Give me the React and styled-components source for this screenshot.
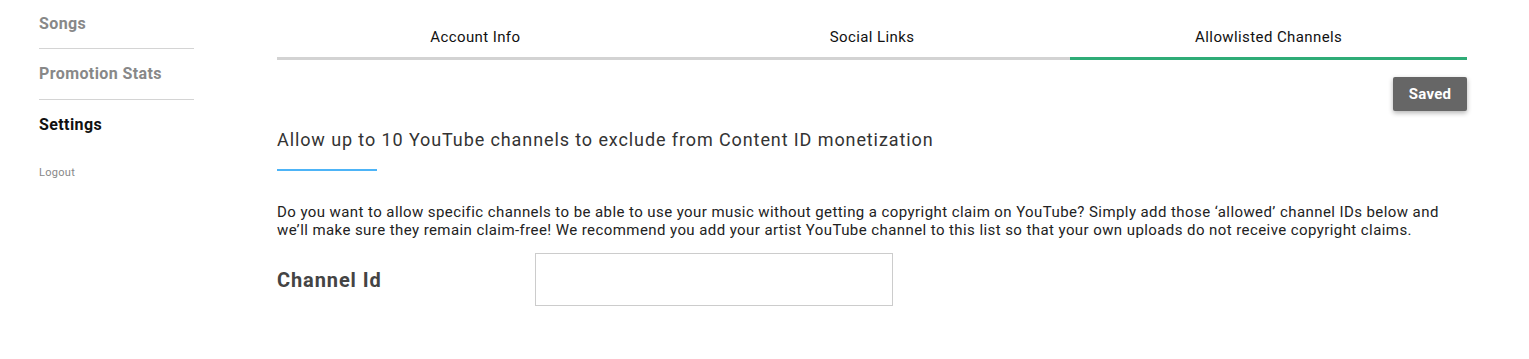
import React from "react";
import styled, { createGlobalStyle } from "styled-components";

const GlobalStyle = createGlobalStyle`
  body {
    margin: 0;
    background: #fff;
    font-family: Roboto, "Liberation Sans", Arial, sans-serif;
  }
`;

const tabs = ["Account Info", "Social Links", "Allowlisted Channels"];

const App = () => {
  return (
    <Page>
      <GlobalStyle />
      <Sidebar>
        <NavItem>Songs</NavItem>
        <NavItem>Promotion Stats</NavItem>
        <NavItem active last>
          Settings
        </NavItem>
        <Logout>Logout</Logout>
      </Sidebar>
      <Main>
        <Tabs>
          {tabs.map((t, i) => (
            <Tab key={t} active={i === 2}>
              {t}
            </Tab>
          ))}
        </Tabs>
        <Actions>
          <SaveBtn type="button">Saved</SaveBtn>
        </Actions>
        <Heading>Allow up to 10 YouTube channels to exclude from Content ID monetization</Heading>
        <Accent />
        <Description>
          Do you want to allow specific channels to be able to use your music without getting a copyright
          claim on YouTube? Simply add those ‘allowed’ channel IDs below and we’ll make sure they remain
          claim-free! We recommend you add your artist YouTube channel to this list so that your own uploads
          do not receive copyright claims.
        </Description>
        <FieldRow>
          <FieldLabel>Channel Id</FieldLabel>
          <TextInput type="text" />
        </FieldRow>
      </Main>
    </Page>
  );
};
export default App;

const Page = styled.div`
  display: flex;
  align-items: flex-start;
  width: 1529px;
  height: 359px;
  overflow: hidden;
`;
const Sidebar = styled.nav`
  display: flex;
  flex-direction: column;
  width: 155px;
  margin-left: 39px;
  margin-right: 83px;
`;
const NavItem = styled.div`
  font-size: 16px;
  line-height: 20px;
  font-weight: 700;
  letter-spacing: 0.4px;
  color: ${(p) => (p.active ? "#111" : "#888")};
  padding: ${(p) => (p.active ? "15px 0 0" : "15px 0 15px")};
  border-bottom: ${(p) => (p.last ? "none" : "1px solid #d4d4d4")};
  &:first-child {
    padding-top: 14px;
    padding-bottom: 14px;
  }
`;
const Logout = styled.div`
  margin-top: 31px;
  font-size: 11px;
  line-height: 14px;
  letter-spacing: 0.3px;
  color: #888;
`;
const Main = styled.main`
  display: flex;
  flex-direction: column;
  width: 1190px;
`;
const Tabs = styled.div`
  display: grid;
  grid-template-columns: repeat(3, 1fr);
`;
const Tab = styled.div`
  text-align: center;
  font-size: 15px;
  line-height: 20px;
  letter-spacing: 0.4px;
  color: #111;
  padding: 27px 0 10px;
  border-bottom: 3px solid ${(p) => (p.active ? "#2fac77" : "#d3d3d3")};
`;
const Actions = styled.div`
  display: flex;
  justify-content: flex-end;
  margin-top: 17px;
`;
const SaveBtn = styled.button`
  width: 74px;
  height: 34px;
  border: none;
  border-radius: 2px;
  background: #666;
  color: #fff;
  font-family: inherit;
  font-size: 15px;
  font-weight: 700;
  letter-spacing: 0.3px;
  box-shadow: 0 2px 5px rgba(0, 0, 0, 0.3);
`;
const Heading = styled.h2`
  margin: 17px 0 0;
  font-size: 18px;
  line-height: 24px;
  font-weight: 400;
  letter-spacing: 0.9px;
  color: #333;
`;
const Accent = styled.div`
  width: 100px;
  height: 2px;
  margin-top: 17px;
  background: #4db4f7;
`;
const Description = styled.p`
  margin: 32px 0 0;
  font-size: 15px;
  line-height: 18px;
  letter-spacing: 0.42px;
  color: #222;
`;
const FieldRow = styled.div`
  display: flex;
  align-items: center;
  margin-top: 14px;
`;
const FieldLabel = styled.label`
  width: 258px;
  font-size: 20px;
  font-weight: 700;
  letter-spacing: 0.9px;
  color: #444;
`;
const TextInput = styled.input`
  box-sizing: border-box;
  width: 358px;
  height: 53px;
  border: 1px solid #ccc;
  outline: none;
  padding: 0 10px;
`;
